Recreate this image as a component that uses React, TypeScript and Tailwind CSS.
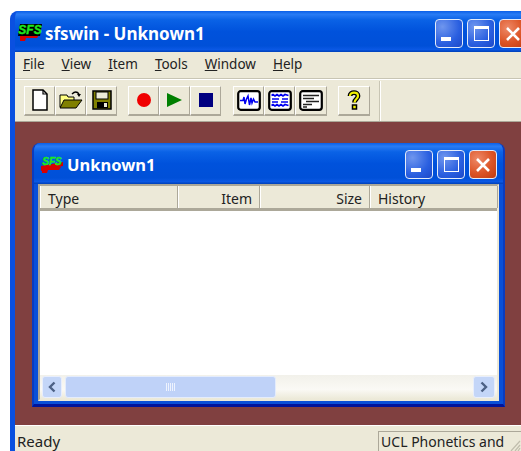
import React from "react";

const titleGradient =
  "bg-[linear-gradient(180deg,#0a5fe8_0%,#2a7cf4_8%,#0a62e6_22%,#0052dc_50%,#0050d8_85%,#0a58e4_94%,#0040b8_100%)]";

function SfsLogo({ small }: { small?: boolean }) {
  return (
    <svg width="24" height="18" viewBox="0 0 24 18" className="shrink-0">
      <path d="M2 12 L21 12 L19 15 L8 15 L7 18 L2 18 Z" fill="#d80000" />
      {!small && <path d="M2 1 H24 L22 13 H0 Z" fill="#000" />}
      {small && <path d="M1 11 L23 7 L23 11 L1 16 Z" fill="#d80000" />}
      <text
        x="12"
        y={small ? 10 : 11}
        textAnchor="middle"
        fontFamily="'Liberation Sans', sans-serif"
        fontSize={small ? 10 : 12}
        fontWeight="700"
        fontStyle="italic"
        fill="#1ee81e"
        stroke="#1ee81e"
        strokeWidth="0.4"
      >
        SFS
      </text>
    </svg>
  );
}

function CaptionButton({ kind, size = 28 }: { kind: "min" | "max" | "close"; size?: number }) {
  const face =
    kind === "close"
      ? "bg-[radial-gradient(circle_at_30%_30%,#ee8a68,#dc5426_55%,#c03a10)]"
      : "bg-[radial-gradient(circle_at_25%_25%,#6f96ee,#2a5fe0_60%,#1c48c8)]";
  return (
    <div
      style={{ width: size, height: size + 1 }}
      className={`shrink-0 flex items-center justify-center rounded-[4px] border border-[#e4ecfa] ${face}`}
    >
      {kind === "min" && (
        <div className="w-[10px] h-[4px] bg-white self-end mb-[6px] mr-[6px]" />
      )}
      {kind === "max" && (
        <div className="w-[15px] h-[15px] border border-white border-t-[3px]" />
      )}
      {kind === "close" && (
        <svg width="16" height="16" viewBox="0 0 16 16">
          <path d="M2 2 L14 14 M14 2 L2 14" stroke="#fff" strokeWidth="2.6" />
        </svg>
      )}
    </div>
  );
}

function ToolButton({ children, wide }: { children: React.ReactNode; wide?: boolean }) {
  return (
    <div
      className={`${wide ? "w-[32px]" : "w-[31px]"} h-[30px] shrink-0 flex items-center justify-center bg-[#ece9d8] border-t border-l border-white border-r border-b-2 border-r-[#aca899] border-b-[#aca899]`}
    >
      {children}
    </div>
  );
}

function ScopeIcon({ variant }: { variant: "wave" | "spect" | "text" }) {
  return (
    <svg width="24" height="21" viewBox="0 0 24 21">
      <rect x="1.2" y="1.2" width="21.6" height="18.6" rx="2.5" fill="#fff" stroke="#000" strokeWidth="2.2" />
      {variant === "wave" && (
        <path d="M3 10.5 H6 L7 7 L8 14 L9.5 9 L11 6 L12.5 15 L14 8 L15 13 L16.5 9 L18 12 H21" fill="none" stroke="#0000f0" strokeWidth="1.5" />
      )}
      {variant === "spect" && (
        <g fill="none" stroke="#0000f0" strokeWidth="1.6">
          <path d="M3.5 5.5 L5 4.5 L7 6 L9 4.5 L11 6 L13 4.5 L15 6 L17 4.5 L20.5 5.5" />
          <path d="M4 9 H11 M14 9 H20" />
          <path d="M4 12 H10 M13 12 H20" />
          <path d="M3.5 15.5 L5 14.5 L7 16 L9 14.5 L11 16 L13 14.5 L15 16 L17 14.5 L20.5 15.5" />
        </g>
      )}
      {variant === "text" && (
        <g stroke="#222" strokeWidth="1.4">
          <path d="M4 5.5 H20" />
          <path d="M4 8.5 H15" />
          <path d="M7 11.5 H20" />
          <path d="M4 14.5 H13" />
          <path d="M4 17 H8" />
        </g>
      )}
    </svg>
  );
}

function HeaderCell({ label, width, right }: { label: string; width: string; right?: boolean }) {
  return (
    <div
      className={`${width} h-full shrink-0 flex items-center px-[7px] pt-[3px] bg-[#ece9d8] border-r border-r-[#aca899] border-l border-l-white ${right ? "justify-end" : "justify-start"}`}
    >
      {label}
    </div>
  );
}

export default function App() {
  return (
    <div
      className="w-[521px] h-[451px] overflow-hidden bg-white pt-[11px] pl-[10px] text-[14px] leading-none text-[#222]"
      style={{ fontFamily: "'Noto Sans', sans-serif" }}
    >
      <div className="w-[530px] h-[440px] flex flex-col rounded-tl-[8px] overflow-hidden bg-[#0a50d8] border-l-[5px] border-l-[#0a50e0]">
        {/* Main caption */}
        <div className={`-ml-[5px] h-[41px] shrink-0 flex items-center pl-[8px] pr-[8px] ${titleGradient}`}>
          <SfsLogo />
          <span className="ml-[3px] mt-[3px] text-[17px] font-bold text-white whitespace-nowrap">sfswin - Unknown1</span>
          <div className="ml-auto mr-[5px] flex gap-[4px] mt-[4px]">
            <CaptionButton kind="min" />
            <CaptionButton kind="max" />
            <CaptionButton kind="close" />
          </div>
        </div>

        {/* Menu bar */}
        <div className="h-[27px] shrink-0 flex items-center bg-[#ece9d8] border-b border-b-[#c8c5b4] pl-[8px] gap-[17px] text-[13.5px]">
          <span><u>F</u>ile</span>
          <span><u>V</u>iew</span>
          <span><u>I</u>tem</span>
          <span><u>T</u>ools</span>
          <span><u>W</u>indow</span>
          <span><u>H</u>elp</span>
        </div>

        {/* Toolbar */}
        <div className="h-[43px] shrink-0 flex items-center bg-[#ece9d8] border-t border-t-white border-b border-b-[#aca899] pl-[9px]">
          <ToolButton>
            <svg width="18" height="22" viewBox="0 0 18 22">
              <path d="M2 1 H12 L16 5 V21 H2 Z" fill="#fff" stroke="#000" strokeWidth="1.5" />
              <path d="M12 1 V5 H16" fill="none" stroke="#000" strokeWidth="1.2" />
            </svg>
          </ToolButton>
          <ToolButton>
            <svg width="24" height="20" viewBox="0 0 24 20">
              <path d="M1 5 H8 L9 7 H15 V17 H1 Z" fill="#ffff80" stroke="#000" />
              <path d="M5 10 H23 L17 18 H1 Z" fill="#808000" stroke="#000" />
              <path d="M13 4 Q17 0 20 4" fill="none" stroke="#000" strokeWidth="1.4" />
              <path d="M18 4 H22 L20 7 Z" fill="#000" />
            </svg>
          </ToolButton>
          <ToolButton>
            <svg width="20" height="20" viewBox="0 0 20 20">
              <rect x="1" y="1" width="18" height="18" fill="#808000" stroke="#000" strokeWidth="1.5" />
              <rect x="4" y="2" width="12" height="7" fill="#ecebd8" stroke="#000" />
              <rect x="5" y="12" width="11" height="6" fill="#000" />
              <rect x="12" y="13" width="3" height="4" fill="#ecebd8" />
            </svg>
          </ToolButton>
          <div className="w-[11px]" />
          <ToolButton>
            <div className="w-[14px] h-[14px] rounded-full bg-[#f00000]" />
          </ToolButton>
          <ToolButton>
            <svg width="15" height="14" viewBox="0 0 15 14">
              <path d="M0 0 L15 7 L0 14 Z" fill="#008000" />
            </svg>
          </ToolButton>
          <ToolButton>
            <div className="w-[14px] h-[14px] bg-[#000080]" />
          </ToolButton>
          <div className="w-[12px]" />
          <ToolButton><ScopeIcon variant="wave" /></ToolButton>
          <ToolButton><ScopeIcon variant="spect" /></ToolButton>
          <ToolButton wide><ScopeIcon variant="text" /></ToolButton>
          <div className="w-[11px]" />
          <ToolButton wide>
            <svg width="14" height="20" viewBox="0 0 14 20">
              <path d="M3 6 C3 1.5 11 1.5 11 6 C11 9 7.5 9 7.5 12.5" fill="none" stroke="#000" strokeWidth="4.8" />
              <path d="M3 6 C3 1.5 11 1.5 11 6 C11 9 7.5 9 7.5 12.5" fill="none" stroke="#f0f000" strokeWidth="2.2" />
              <rect x="5.5" y="15" width="4" height="4" fill="#f0f000" stroke="#000" strokeWidth="1.5" />
            </svg>
          </ToolButton>
          <div className="ml-[9px] w-[2px] h-[40px] bg-white border-l border-l-[#c8c5b4]" />
        </div>

        {/* MDI workspace */}
        <div className="h-[303px] shrink-0 bg-[#804040] pt-[21px] pl-[17px]">
          {/* Child window */}
          <div className="w-[473px] h-[264px] flex flex-col rounded-t-[8px] overflow-hidden bg-[#0a50d8] border-b-[3px] border-b-[#00149c] border-r-[2px] border-r-[#0a3cc0] border-l-[2px] border-l-[#0a3cc0]">
            <div className={`-mx-[2px] h-[41px] shrink-0 flex items-center pl-[8px] ${titleGradient}`}>
              <SfsLogo small />
              <span className="ml-[3px] mt-[3px] text-[16.5px] font-bold text-white whitespace-nowrap">Unknown1</span>
              <div className="ml-auto mr-[8px] flex gap-[4px] mt-[2px]">
                <CaptionButton kind="min" />
                <CaptionButton kind="max" />
                <CaptionButton kind="close" />
              </div>
            </div>
            <div className="mx-[4px] mb-[3px] flex-1 flex flex-col bg-white border-2 border-[#ece9d8] border-t-[#aca899] border-l-[#aca899]">
              <div className="h-[25px] shrink-0 flex bg-[#ece9d8] border-b-[3px] border-b-[#aca899]">
                <HeaderCell label="Type" width="w-[138px]" />
                <HeaderCell label="Item" width="w-[82px]" right />
                <HeaderCell label="Size" width="w-[110px]" right />
                <HeaderCell label="History" width="w-[128px]" />
              </div>
              <div className="flex-1" />
              {/* Horizontal scroll bar */}
              <div className="h-[24px] shrink-0 flex items-center gap-[2px] px-[2px] bg-[linear-gradient(180deg,#f2f1ea,#faf9f5_60%,#ece9d8)]">
                <div className="w-[20px] h-[22px] rounded-[3px] bg-[#c4d6f8] border border-[#e8eefc] flex items-center justify-center">
                  <svg width="10" height="12" viewBox="0 0 10 12">
                    <path d="M7.5 1.5 L3 6 L7.5 10.5" fill="none" stroke="#4d6185" strokeWidth="2.4" />
                  </svg>
                </div>
                <div className="w-[211px] h-[22px] rounded-[3px] bg-[#bfd2f8] border border-[#e4ecfc] flex items-center justify-center gap-[1px] ml-[1px]">
                  {[0, 1, 2, 3, 4].map((i) => (
                    <div key={i} className="w-px h-[8px] bg-[#eef3fe]" />
                  ))}
                </div>
                <div className="ml-auto w-[22px] h-[22px] rounded-[3px] bg-[#c4d6f8] border border-[#e8eefc] flex items-center justify-center">
                  <svg width="10" height="12" viewBox="0 0 10 12">
                    <path d="M2.5 1.5 L7 6 L2.5 10.5" fill="none" stroke="#4d6185" strokeWidth="2.4" />
                  </svg>
                </div>
              </div>
            </div>
          </div>
        </div>

        {/* Status bar */}
        <div className="h-[26px] shrink-0 flex bg-[#ece9d8] border-t border-t-white pl-[2px]">
          <span className="mt-[8px] text-[15px]">Ready</span>
          <div className="ml-[318px] mt-[5px] w-[143px] h-[20px] pl-[2px] pt-[3px] flex justify-between whitespace-nowrap border-t border-l border-[#aca899] overflow-hidden">
            <span>UCL Phonetics and</span>
            <svg width="12" height="14" viewBox="0 0 12 14" className="shrink-0 self-end">
              <path d="M11 4 L2 14 M11 8 L6 14 M11 11 L9 14" stroke="#c0bdac" strokeWidth="1.2" fill="none" />
            </svg>
          </div>
        </div>
      </div>
    </div>
  );
}
